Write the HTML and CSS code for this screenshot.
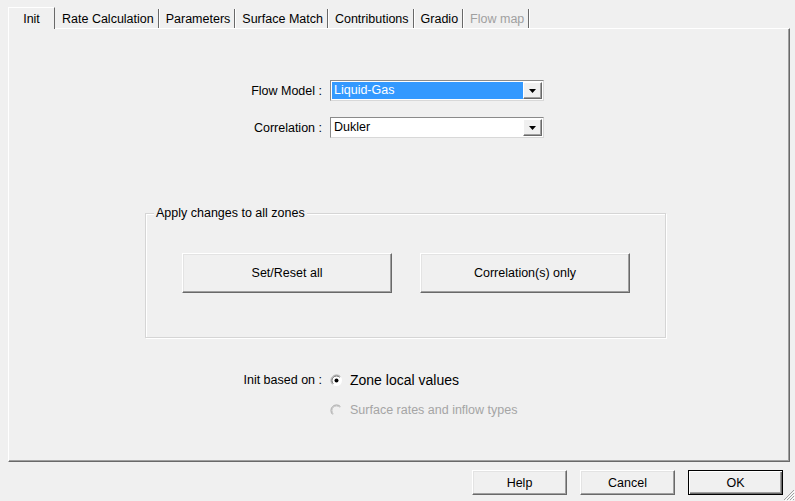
FILE: index.html
```html
<!DOCTYPE html>
<html>

<head>
    <link rel="stylesheet" href="styles.css">
</head>

<body>
    <div class="dialog">
        <div class="tabs">
            <div class="tab active">Init</div>
            <div class="tab">Rate Calculation</div>
            <div class="tab">Parameters</div>
            <div class="tab">Surface Match</div>
            <div class="tab">Contributions</div>
            <div class="tab">Gradio</div>
            <div class="tab disabled">Flow map</div>
        </div>

        <div class="panel">
            <div class="form">
                <label class="label">Flow Model :</label>
                <div class="combo focused">
                    <span class="value">Liquid-Gas</span>
                    <span class="arrow"><svg width="7" height="4" viewBox="0 0 7 4"><path d="M0 0h7L3.5 4z" fill="#000"/></svg></span>
                </div>
                <label class="label">Correlation :</label>
                <div class="combo">
                    <span class="value">Dukler</span>
                    <span class="arrow"><svg width="7" height="4" viewBox="0 0 7 4"><path d="M0 0h7L3.5 4z" fill="#000"/></svg></span>
                </div>
            </div>

            <div class="group">
                <span class="group-title">Apply changes to all zones</span>
                <button class="btn big">Set/Reset all</button>
                <button class="btn big">Correlation(s) only</button>
            </div>

            <div class="form radios">
                <span class="label">Init based on :</span>
                <div class="radio">
                    <svg width="13" height="13" viewBox="0 0 13 13">
                        <circle cx="6.5" cy="6.5" r="5.5" fill="#fff"/>
                        <path d="M2.6 10.4A5.5 5.5 0 0 1 10.4 2.6" fill="none" stroke="#a0a0a0"/>
                        <path d="M3.3 9.7A4.5 4.5 0 0 1 9.7 3.3" fill="none" stroke="#696969"/>
                        <circle cx="6.5" cy="6.5" r="2" fill="#000"/>
                    </svg>
                    <span class="radio-text big-text">Zone local values</span>
                </div>
                <span></span>
                <div class="radio disabled">
                    <svg width="13" height="13" viewBox="0 0 13 13">
                        <path d="M2.6 10.4A5.5 5.5 0 0 1 10.4 2.6" fill="none" stroke="#a0a0a0"/>
                        <path d="M3.3 9.7A4.5 4.5 0 0 1 9.7 3.3" fill="none" stroke="#c4c4c4"/>
                    </svg>
                    <span class="radio-text">Surface rates and inflow types</span>
                </div>
            </div>
        </div>

        <div class="footer">
            <button class="btn">Help</button>
            <button class="btn">Cancel</button>
            <button class="btn default">OK</button>
        </div>

        <svg class="grip" width="12" height="12" viewBox="0 0 12 12">
            <path d="M11 1L1 11M11 4L4 11M11 7L7 11M11 10L10 11" stroke="#a0a0a0" fill="none"/>
            <path d="M12 2L2 12M12 5L5 12M12 8L8 12" stroke="#fff" fill="none"/>
        </svg>
    </div>
</body>

</html>
```

FILE: styles.css
```css
body {
    margin: 0;
    background-color: #f0f0f0;
    font-family: "Liberation Sans", Arial, sans-serif;
    font-size: 12.5px;
    color: #000;
}

.dialog {
    position: relative;
    width: 795px;
    height: 501px;
    overflow: hidden;
}

/* tab strip */
.tabs {
    display: flex;
    align-items: flex-end;
    height: 28px;
    padding-left: 8px;
}

.tab {
    height: 19px;
    line-height: 20px;
    padding: 0 4px 0 7px;
    border-right: 1px solid #696969;
    box-shadow: 1px 0 0 #fff;
    white-space: nowrap;
}

.tab.active {
    position: relative;
    z-index: 1;
    width: 45px;
    height: 21px;
    line-height: 23px;
    padding: 0;
    margin-bottom: -1px;
    text-align: center;
    background-color: #f0f0f0;
    border-top: 1px solid #fff;
    border-left: 1px solid #fff;
    box-shadow: none;
}

.tab.disabled {
    color: #a0a0a0;
}

.panel {
    box-sizing: border-box;
    width: 782px;
    height: 434px;
    margin-left: 8px;
    border-top: 1px solid #fff;
    border-left: 1px solid #fff;
    border-right: 1px solid #696969;
    border-bottom: 1px solid #696969;
    box-shadow: inset -1px -1px 0 #a0a0a0;
}

/* label + field rows */
.form {
    display: grid;
    grid-template-columns: 313px 214px;
    column-gap: 8px;
    row-gap: 16px;
    align-items: center;
    margin-top: 51px;
}

.label {
    text-align: right;
    white-space: nowrap;
}

.combo {
    box-sizing: border-box;
    display: flex;
    height: 21px;
    padding: 1px;
    background-color: #fff;
    border: 1px solid;
    border-color: #8a8a8a #d8d8d8 #d8d8d8 #8a8a8a;
}

.combo .value {
    flex: 1;
    padding-left: 2px;
    line-height: 17px;
}

.combo.focused .value {
    background-color: #3399ff;
    color: #fff;
}

.combo .arrow {
    box-sizing: border-box;
    width: 19px;
    display: flex;
    align-items: center;
    justify-content: center;
    background-color: #f0f0f0;
    border: 1px solid;
    border-color: #fff #696969 #696969 #fff;
    box-shadow: inset -1px -1px 0 #a0a0a0;
}

/* group box */
.group {
    position: relative;
    box-sizing: border-box;
    display: flex;
    gap: 28px;
    width: 521px;
    height: 125px;
    margin: 75px 0 0 136px;
    padding: 39px 0 0 36px;
    border: 1px solid #d5d5d5;
    box-shadow: inset 1px 1px 0 #fff, 1px 1px 0 #fff;
}

.group-title {
    position: absolute;
    top: -9px;
    left: 8px;
    padding: 0 2px;
    line-height: 16px;
    background-color: #f0f0f0;
}

.btn {
    box-sizing: border-box;
    width: 95px;
    height: 25px;
    padding: 0;
    font-family: inherit;
    font-size: 12.5px;
    color: #000;
    background-color: #f0f0f0;
    border: 1px solid;
    border-color: #fff #696969 #696969 #fff;
    box-shadow: inset -1px -1px 0 #a0a0a0, inset 1px 1px 0 #e3e3e3;
}

.btn.big {
    width: 210px;
    height: 40px;
}

.btn.default {
    border-color: #000;
    box-shadow: inset 1px 1px 0 #fff, inset -1px -1px 0 #696969, inset -2px -2px 0 #a0a0a0;
}

/* radio rows */
.radios {
    margin-top: 32px;
    row-gap: 10px;
}

.radio {
    display: flex;
    align-items: center;
    gap: 7px;
    height: 20px;
}

.radio-text {
    white-space: nowrap;
}

.big-text {
    font-size: 14px;
}

.radio.disabled {
    color: #a5a5a5;
}

.footer {
    display: flex;
    justify-content: flex-end;
    gap: 13px;
    padding: 8px 12px 0 0;
}

.grip {
    position: absolute;
    right: 0;
    bottom: 0;
}
```
